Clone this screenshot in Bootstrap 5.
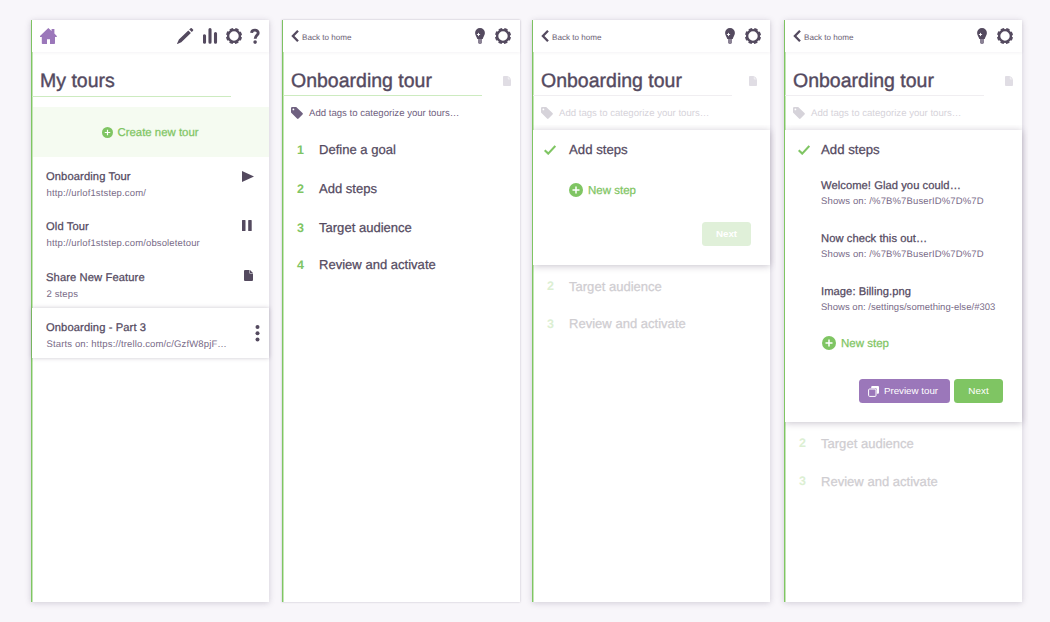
<!DOCTYPE html>
<html lang="en">
<head>
<meta charset="utf-8">
<meta name="viewport" content="width=device-width, initial-scale=1">
<title>Tours</title>
<link href="https://cdn.jsdelivr.net/npm/bootstrap@5.3.0/dist/css/bootstrap.min.css" rel="stylesheet">
<style>
:root{--ink:#544a5f;--green:#7fc563;--violet:#9b77ba}
body{background:#f8f6fa;font-family:"Liberation Sans",Arial,sans-serif;color:var(--ink);text-rendering:geometricPrecision;overflow:hidden}
svg{display:block;flex:none}
.board{padding:20px 28px 20px 31px;height:622px}
.panel{width:238px;height:582px;background:#fff;border-left:1px solid var(--green);box-shadow:inset 1px 0 #c4e6b6,0 1px 6px rgba(70,55,85,.22)}
.panel-flat{box-shadow:inset 1px 0 #c4e6b6,0 0 2px rgba(70,55,85,.3)}
.topbar{height:32px;background:#fff;box-shadow:0 1px 3px rgba(70,55,85,.06);padding:0 9px 0 8px}
.back{font-size:8.1px;color:#6a6074;line-height:12px;padding-top:4px;margin-left:3px}
.head{height:44px;width:199px;border-bottom:1px solid #cdebc0}
.head-home{height:45px}
.head-dim{border-color:#f0eef1}
.title{font-size:19.5px;line-height:24px;margin:0;padding:17px 0 0 8px;font-weight:400;-webkit-text-stroke:.4px;white-space:nowrap}
.medium{-webkit-text-stroke:.25px}
.create{height:50px;margin:10px 0 0 1px;padding-right:1px;background:#f5fbf1;color:var(--green);font-size:11.4px;gap:4px}
.create span{padding-top:4px}
.tour{height:50px;padding:12px 15px 0 14px}
.tour-tall{height:51px}
.tour-raised{background:#fff;box-shadow:0 0 4px rgba(70,55,85,.28);padding-right:9px}
.name{font-size:11.2px;line-height:16px;white-space:nowrap;letter-spacing:.06px}
.tour .name{letter-spacing:.1px}
.url{font-size:9.5px;line-height:16px;margin-top:1px;color:#796b88;white-space:nowrap;letter-spacing:.14px}
.tour .url{padding-left:.5px}
.shows{font-size:9.5px;letter-spacing:.13px;margin-top:0}
.tags{height:34px;padding:0 0 0 8px;gap:6px;font-size:9.6px;color:#6f6180}
.tags span{padding-top:3px}
.tags.faded{color:#d6d3da}
.doc{color:#e0dde4}
.step{height:38px;padding-left:14px;font-size:13.05px}
.step-no{width:22px;color:var(--green);font-weight:700;font-size:12.500px}
.step-dim{color:#cfcdd1}
.step-dim .step-no{color:#dcefd3}
.sheet{background:#fff;box-shadow:0 1px 7px rgba(70,55,85,.3);clip-path:inset(-5px -6px -9px 0);padding:0 19px 0 36px}
.sheet-head{height:40px;font-size:13.2px;margin-left:-25px}
.new-step{color:var(--green);font-size:11.5px;gap:5px}
.new-step span{padding-top:3px}
.action{height:24px;border-radius:3.5px;border:0;font-size:9.9px;line-height:24px;padding:0;color:#fff;background:var(--green);width:49px}
.action-off{background:#e0f0d9;font-weight:700;font-size:9.8px;line-height:22px}
.action-view{background:var(--violet);width:91px;gap:5px;font-size:9.75px;padding-right:3px}
</style>
</head>
<body>
<svg width="0" height="0" class="position-absolute" aria-hidden="true">
<defs>
<symbol id="gear" viewBox="0 0 16 16"><circle cx="8" cy="8" r="5.900" fill="none" stroke="currentColor" stroke-width="2.400"/><circle cx="8" cy="8" r="7.100" fill="none" stroke="currentColor" stroke-width="1.900" stroke-dasharray="3.500 2.076" stroke-dashoffset="-1.040"/></symbol>
<symbol id="bulb" viewBox="0 0 10 16"><path fill="currentColor" d="M5 0a4.900 4.900 0 0 1 4.900 5c0 2.400-1.700 3.600-2.200 6H2.300C1.800 8.600.1 7.400.1 5A4.900 4.900 0 0 1 5 0z"/><path d="M3 11h4v3.800l-1 1.200H4l-1-1.200z" fill="#8b8295"/><path d="M3.500 4.900v3.200M1.900 6.500h3.200" stroke="#fff" stroke-width=".9"/></symbol>
<symbol id="plus" viewBox="0 0 14 14"><circle cx="7" cy="7" r="7" fill="currentColor"/><path d="M7 3.500v7M3.500 7h7" stroke="#fff" stroke-width="1.500"/></symbol>
<symbol id="file" viewBox="0 0 9 11"><path fill="currentColor" d="M1 0h4.500v3.600H9V10a1 1 0 0 1-1 1H1a1 1 0 0 1-1-1V1a1 1 0 0 1 1-1zM6 0l3 3.100H6z"/></symbol>
<symbol id="tag" viewBox="0 0 12 12"><path fill="currentColor" fill-rule="evenodd" d="M0 1.200Q0 0 1.200 0h4L11.500 6q.8.800 0 1.600l-3.900 3.900q-.8.800-1.600 0L0 5.500zM2.400 1.500a.9.900 0 1 0 0 1.800.9.900 0 0 0 0-1.800z"/></symbol>
<symbol id="chev" viewBox="0 0 8 12"><path d="M7 .8 1.900 6 7 11.200" fill="none" stroke="currentColor" stroke-width="2.300"/></symbol>
<symbol id="check" viewBox="0 0 12 10"><path d="M.7 5.200 4.200 8.600 11.300.9" fill="none" stroke="currentColor" stroke-width="2.100"/></symbol>
</defs>
</svg>

<main class="board d-flex">
<section class="panel">
  <div class="topbar d-flex align-items-center justify-content-between position-relative">
    <svg width="17" height="16" viewBox="0 0 17 16" style="color:var(--violet)"><path fill="currentColor" d="M8.300 0 11.600 3V1h2.800v4.400L16.800 8v.9H15v6.300q0 .8-.8.800H10v-4.800H7V16H2.600q-.8 0-.8-.8V8.900H0V8z"/></svg>
    <div class="d-flex align-items-center">
      <svg width="17" height="16" viewBox="0 0 17 16" style="margin-right:9px"><path fill="currentColor" d="M11.300 2.400 13.900 5 4.300 14.200 .4 16q-.5 0-.3-.6L1.900 11.500zM12.200 1.600 13.600.3q.6-.5 1.200 0L16 1.500q.6.600 0 1.200l-1.200 1.400z"/></svg>
      <svg width="16" height="16" viewBox="0 0 16 16" style="margin-right:7px"><path d="M1.500 7.700v6.500M7 1.600v12.600M12.500 5.500v8.700" stroke="currentColor" stroke-width="3.100" stroke-linecap="round"/></svg>
      <svg width="16" height="16" style="margin-right:8px"><use href="#gear"/></svg>
      <svg width="10" height="16" viewBox="0 0 10 16"><path d="M1.600 4.900C1.800 1.200 8.200 1.100 8.200 4.900 8.200 7.300 5.200 7.300 5.200 10.700" fill="none" stroke="currentColor" stroke-width="2.900"/><circle cx="5.100" cy="14.100" r="1.800" fill="currentColor"/></svg>
    </div>
  </div>
  <div class="head head-home"><h1 class="title">My tours</h1></div>
  <div class="create d-flex align-items-center justify-content-center"><svg width="11" height="11"><use href="#plus"/></svg><span class="medium">Create new tour</span></div>
  <div class="tour d-flex justify-content-between"><div><div class="name medium">Onboarding Tour</div><div class="url">http://urlof1ststep.com/</div></div><svg width="12" height="11" viewBox="0 0 12 11" style="margin-top:2px"><path d="M0 0v11l12-5.500z" fill="currentColor"/></svg></div>
  <div class="tour tour-tall d-flex justify-content-between"><div><div class="name medium">Old Tour</div><div class="url">http://urlof1ststep.com/obsoletetour</div></div><svg width="12" height="11" viewBox="0 0 12 11" style="margin-top:1px"><path d="M.5 0h2.500q.5 0 .5.500v10q0 .5-.5.500H.5q-.5 0-.5-.5V.5Q0 0 .5 0zM6.700 0h2.500q.5 0 .5.500v10q0 .5-.5.500H6.700q-.5 0-.5-.5V.5q0-.5.500-.5z" fill="currentColor"/></svg></div>
  <div class="tour d-flex justify-content-between"><div><div class="name medium">Share New Feature</div><div class="url">2 steps</div></div><svg width="9" height="11" style="margin-right:1px"><use href="#file"/></svg></div>
  <div class="tour tour-raised d-flex justify-content-between"><div><div class="name medium">Onboarding - Part 3</div><div class="url">Starts on: https://trello.com/c/GzfW8pjF…</div></div><svg width="5" height="17" viewBox="0 0 5 17" style="margin-top:5px"><g fill="currentColor"><circle cx="2.500" cy="2" r="2"/><circle cx="2.500" cy="8.200" r="2"/><circle cx="2.500" cy="14.400" r="2"/></g></svg></div>
</section>

<section class="panel panel-flat" style="margin-left:13px">
  <div class="topbar d-flex align-items-center position-relative">
    <svg width="8" height="12"><use href="#chev"/></svg><span class="back">Back to home</span>
    <svg width="10" height="16" class="ms-auto"><use href="#bulb"/></svg><svg width="16" height="16" style="margin-left:10px"><use href="#gear"/></svg>
  </div>
  <div class="d-flex"><div class="head"><h2 class="title">Onboarding tour</h2></div><svg width="8" height="10" class="doc" style="margin:24px 0 0 21px"><use href="#file"/></svg></div>
  <div class="tags d-flex align-items-center"><svg width="12" height="12"><use href="#tag"/></svg><span>Add tags to categorize your tours…</span></div>
  <div class="step d-flex align-items-center" style="height:40px"><span class="step-no">1</span><span class="medium">Define a goal</span></div>
  <div class="step d-flex align-items-center"><span class="step-no">2</span><span class="medium">Add steps</span></div>
  <div class="step d-flex align-items-center" style="height:40px"><span class="step-no">3</span><span class="medium">Target audience</span></div>
  <div class="step d-flex align-items-center" style="height:34px"><span class="step-no">4</span><span class="medium">Review and activate</span></div>
</section>

<section class="panel" style="margin-left:12px">
  <div class="topbar d-flex align-items-center position-relative">
    <svg width="8" height="12"><use href="#chev"/></svg><span class="back">Back to home</span>
    <svg width="10" height="16" class="ms-auto"><use href="#bulb"/></svg><svg width="16" height="16" style="margin-left:10px"><use href="#gear"/></svg>
  </div>
  <div class="d-flex"><div class="head head-dim"><h2 class="title">Onboarding tour</h2></div><svg width="8" height="10" class="doc" style="margin:24px 0 0 17px"><use href="#file"/></svg></div>
  <div class="tags faded d-flex align-items-center"><svg width="12" height="12"><use href="#tag"/></svg><span>Add tags to categorize your tours…</span></div>
  <div class="sheet" style="height:135px">
    <div class="sheet-head d-flex align-items-center"><svg width="12" height="10" style="color:var(--green)"><use href="#check"/></svg><span class="medium" style="margin-left:13px">Add steps</span></div>
    <div class="new-step d-flex align-items-center" style="height:40px"><svg width="14" height="14"><use href="#plus"/></svg><span class="medium">New step</span></div>
    <div class="d-flex justify-content-end" style="padding-top:12px"><button class="action action-off" disabled>Next</button></div>
  </div>
  <div class="step step-dim d-flex align-items-center" style="height:43px"><span class="step-no">2</span><span class="medium">Target audience</span></div>
  <div class="step step-dim d-flex align-items-center" style="height:32px"><span class="step-no">3</span><span class="medium">Review and activate</span></div>
</section>

<section class="panel" style="margin-left:14px">
  <div class="topbar d-flex align-items-center position-relative">
    <svg width="8" height="12"><use href="#chev"/></svg><span class="back">Back to home</span>
    <svg width="10" height="16" class="ms-auto"><use href="#bulb"/></svg><svg width="16" height="16" style="margin-left:10px"><use href="#gear"/></svg>
  </div>
  <div class="d-flex"><div class="head head-dim"><h2 class="title">Onboarding tour</h2></div><svg width="8" height="10" class="doc" style="margin:24px 0 0 21px"><use href="#file"/></svg></div>
  <div class="tags faded d-flex align-items-center"><svg width="12" height="12"><use href="#tag"/></svg><span>Add tags to categorize your tours…</span></div>
  <div class="sheet" style="height:292px">
    <div class="sheet-head d-flex align-items-center"><svg width="12" height="10" style="color:var(--green);margin-left:2px"><use href="#check"/></svg><span class="medium" style="margin-left:11px">Add steps</span></div>
    <div style="height:53px;padding-top:8px"><div class="name medium">Welcome! Glad you could…</div><div class="url shows">Shows on: /%7B%7BuserID%7D%7D</div></div>
    <div style="height:53px;padding-top:8px"><div class="name medium">Now check this out…</div><div class="url shows">Shows on: /%7B%7BuserID%7D%7D</div></div>
    <div style="height:53px;padding-top:8px"><div class="name medium">Image: Billing.png</div><div class="url shows" style="letter-spacing:.03px">Shows on: /settings/something-else/#303</div></div>
    <div class="new-step d-flex align-items-center" style="height:28px;padding-left:1px"><svg width="14" height="14"><use href="#plus"/></svg><span class="medium">New step</span></div>
    <div class="d-flex justify-content-end" style="padding-top:22px;gap:4px"><button class="action action-view d-flex align-items-center justify-content-center"><svg width="11" height="11" viewBox="0 0 11 11"><path fill="#fff" d="M4.200 0H10q1 0 1 1v5.800q0 1-1 1H8.800V3.200q0-1-1-1H3.200V1q0-1 1-1z"/><rect x=".6" y="3" width="7.400" height="7.400" rx="1" fill="none" stroke="#fff"/></svg><span>Preview tour</span></button><button class="action">Next</button></div>
  </div>
  <div class="step step-dim d-flex align-items-center" style="height:43px"><span class="step-no">2</span><span class="medium">Target audience</span></div>
  <div class="step step-dim d-flex align-items-center" style="height:33px"><span class="step-no">3</span><span class="medium">Review and activate</span></div>
</section>
</main>
<script src="https://cdn.jsdelivr.net/npm/bootstrap@5.3.0/dist/js/bootstrap.bundle.min.js"></script>
</body>
</html>
